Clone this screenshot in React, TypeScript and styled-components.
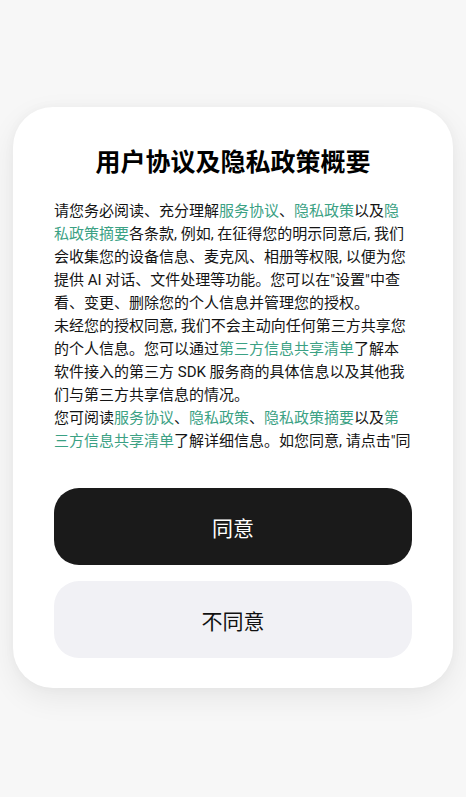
import styled, { createGlobalStyle } from 'styled-components'

const GlobalStyle = createGlobalStyle`
  html, body {
    margin: 0;
    padding: 0;
    background: #f7f7f7;
  }
  body {
    font-family: Roboto, "Noto Sans CJK SC", "Noto Sans", sans-serif;
    color: #111;
  }
`

const Page = styled.div`
  width: 466px;
  height: 797px;
  box-sizing: border-box;
  padding-top: 107px;
  display: flex;
  justify-content: center;
  align-items: flex-start;
`

const Card = styled.div`
  width: 440px;
  box-sizing: border-box;
  padding: 39px 41px 30px;
  background: #fff;
  border-radius: 40px;
  box-shadow: 0 10px 30px rgba(0, 0, 0, 0.07), 0 0 12px rgba(0, 0, 0, 0.03);
  display: flex;
  flex-direction: column;
`

const Title = styled.h1`
  margin: 0;
  font-size: 25px;
  line-height: 34px;
  font-weight: 700;
  text-align: center;
  color: #000;
`

const Body = styled.div`
  margin-top: 20px;
  height: 253px;
  overflow: hidden;
  font-size: 15px;
  line-height: 23px;
  color: #141414;
`

const Para = styled.p`
  margin: 0;
`

const Link = styled.span`
  color: #3ba184;
`

const Actions = styled.div`
  margin-top: 35px;
  display: flex;
  flex-direction: column;
  gap: 16px;
`

const Button = styled.button<{ $primary?: boolean }>`
  height: 77px;
  border: none;
  border-radius: 25px;
  font-family: inherit;
  font-size: 21px;
  background: ${p => (p.$primary ? '#1a1a1a' : '#f1f1f5')};
  color: ${p => (p.$primary ? '#fff' : '#111')};
  cursor: pointer;
`

export default function App() {
  return (
    <>
      <GlobalStyle />
      <Page>
        <Card>
          <Title>用户协议及隐私政策概要</Title>
          <Body>
            <Para>
              请您务必阅读、充分理解<Link>服务协议</Link>、<Link>隐私政策</Link>以及<Link>隐私政策摘要</Link>各条款, 例如, 在征得您的明示同意后, 我们会收集您的设备信息、麦克风、相册等权限, 以便为您提供 AI 对话、文件处理等功能。您可以在"设置"中查看、变更、删除您的个人信息并管理您的授权。
            </Para>
            <Para>
              未经您的授权同意, 我们不会主动向任何第三方共享您的个人信息。您可以通过<Link>第三方信息共享清单</Link>了解本软件接入的第三方 SDK 服务商的具体信息以及其他我们与第三方共享信息的情况。
            </Para>
            <Para>
              您可阅读<Link>服务协议</Link>、<Link>隐私政策</Link>、<Link>隐私政策摘要</Link>以及<Link>第三方信息共享清单</Link>了解详细信息。如您同意, 请点击"同意"开始使用我们的服务。
            </Para>
          </Body>
          <Actions>
            <Button $primary>同意</Button>
            <Button>不同意</Button>
          </Actions>
        </Card>
      </Page>
    </>
  )
}
